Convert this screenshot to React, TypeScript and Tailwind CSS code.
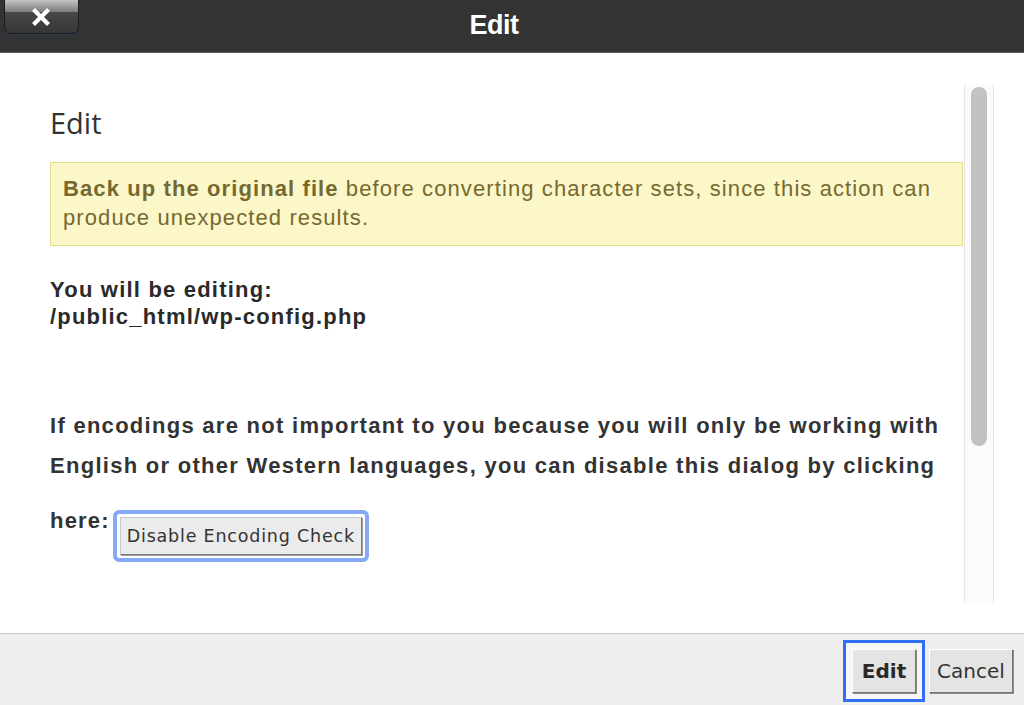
import React from "react";

function CloseX() {
  return (
    <svg width="18" height="18" viewBox="0 0 18 18">
      <path d="M3 3 L15 15 M15 3 L3 15" stroke="#ffffff" strokeWidth="4.2" strokeLinecap="square" />
    </svg>
  );
}

export default function App() {
  return (
    <div className="w-[1024px] h-[705px] flex flex-col bg-white overflow-hidden font-['Liberation_Sans',Arial,sans-serif]">
      {/* Header */}
      <div className="h-[53px] shrink-0 bg-[#333333] border-b border-[#5c5c5c] flex items-start relative">
        <div className="absolute left-[4px] top-0 w-[75px] h-[34px] rounded-b-[7px] bg-[#1c1c1c] p-[1px] pt-0 shadow-[0_1px_2px_rgba(40,60,90,0.8)]">
          <div className="w-full h-full rounded-b-[6px] overflow-hidden flex flex-col">
            <div className="h-[12px] bg-gradient-to-b from-[#c4c4c4] to-[#7c7c7c]"></div>
            <div className="flex-1 bg-gradient-to-b from-[#484848] to-[#363636]"></div>
          </div>
          <div className="absolute inset-0 flex items-center justify-center pb-[1px] pr-[1px]">
            <CloseX />
          </div>
        </div>
        <div className="flex-1 h-full flex items-center justify-center pr-[36px] pb-[2px]">
          <span className="text-white font-bold text-[27px] leading-none tracking-[-0.5px]">Edit</span>
        </div>
      </div>

      {/* Body */}
      <div className="flex-1 flex flex-row min-h-0">
        <div className="flex-1 pl-[50px] pt-[50px] min-w-0">
          <h1 className="h-[40px] leading-[40px] text-[29px] font-normal text-[#333333] font-['Open_Sans',sans-serif]">Edit</h1>
          <div className="mt-[19px] mr-[1px] border border-[#e4dd8c] bg-[#fcf7c9] pl-[12px] pt-[11px] pb-[13px] text-[22px] leading-[29px] tracking-[1.1px] text-[#76692f] whitespace-nowrap">
            <b>Back up the original file</b> before converting character sets, since this action can
            <br />
            produce unexpected results.
          </div>
          <div className="mt-[30px] text-[22px] leading-[27px] font-bold tracking-[1.2px] text-[#2a2a2a] whitespace-nowrap">
            You will be editing:
            <br />
            /public_html/wp-config.php
          </div>
          <div className="mt-[76px] text-[22px] leading-[40px] font-bold tracking-[1.28px] text-[#333333] whitespace-nowrap">
            If encodings are not important to you because you will only be working with
            <br />
            English or other Western languages, you can disable this dialog by clicking
          </div>
          <div className="mt-[21px] flex items-start">
            <span className="text-[22px] leading-[27px] font-bold tracking-[1.2px] text-[#333333]">here:</span>
            <div className="ml-[3px] mt-[3px] rounded-[6px] border-[4px] border-[#86a9f7] p-[3px] bg-white">
              <button className="h-[38px] w-[242px] bg-[#ebebeb] border border-t-[#c9c9c9] border-l-[#c9c9c9] border-r-[#7e7e7e] border-b-[#7e7e7e] shadow-[1px_1px_0_#9a9a9a] text-[17.5px] tracking-[0.8px] text-[#333333] font-['DejaVu_Sans',Verdana,sans-serif] flex items-center justify-center pt-[1px]">
                Disable Encoding Check
              </button>
            </div>
          </div>
        </div>
        <div className="w-[30px] shrink-0 mt-[31px] h-[519px] border-x border-[#e6e6e6] bg-[#fbfbfb] flex justify-center">
          <div className="mt-[3px] w-[16px] h-[359px] rounded-full bg-[#c2c2c2]"></div>
        </div>
        <div className="w-[30px] shrink-0"></div>
      </div>

      {/* Footer */}
      <div className="h-[72px] shrink-0 border-t border-[#c8c8c8] bg-[#efefef] flex justify-end items-start pt-[6px] pr-[11px] font-['DejaVu_Sans',Verdana,sans-serif]">
        <div className="border-[3px] border-[#2f6ef5] p-[6px] bg-[#f6f6f6]">
          <button className="w-[64px] h-[44px] bg-[#e4e4e4] border border-t-white border-l-white border-r-[#777777] border-b-[#777777] shadow-[1px_1px_0_#8a8a8a] text-[20px] font-bold text-[#2a2a2a] flex items-center justify-center pb-[1px]">
            Edit
          </button>
        </div>
        <button className="ml-[4px] mt-[9px] w-[84px] h-[44px] bg-[#e4e4e4] border border-t-white border-l-white border-r-[#777777] border-b-[#777777] shadow-[1px_1px_0_#8a8a8a] text-[20px] text-[#333333] flex items-center justify-center pb-[1px]">
          Cancel
        </button>
      </div>
    </div>
  );
}
